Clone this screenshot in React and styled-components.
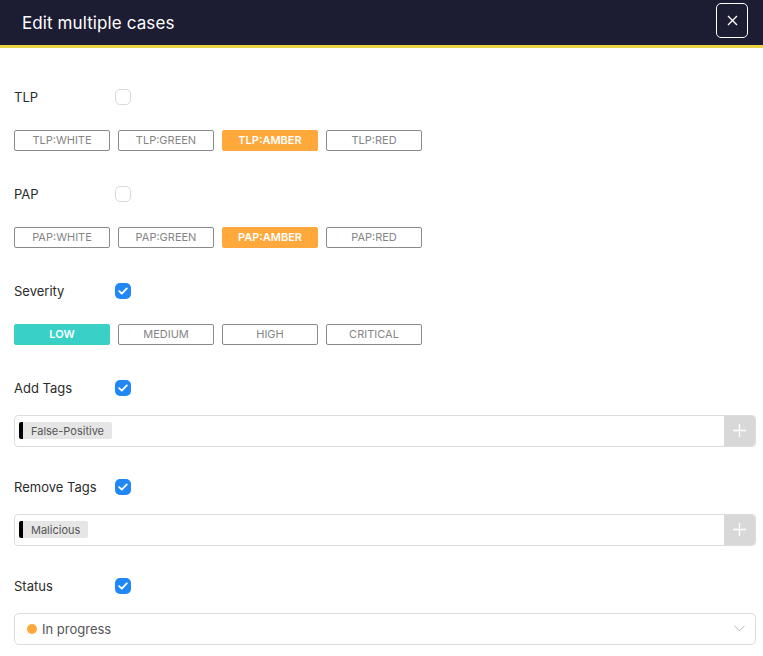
import styled, { createGlobalStyle } from 'styled-components';

const Global = createGlobalStyle`
  body {
    margin: 0;
    background: #ffffff;
    font-family: Inter, "Open Sans", sans-serif;
    color: #2b2b2b;
  }
`;

const Header = styled.div`
  height: 45px;
  background: #1c1c33;
  border-bottom: 3px solid #ead445;
  display: flex;
  align-items: center;
  justify-content: space-between;
  padding: 0 15px 0 22px;
`;

const Title = styled.h2`
  margin: 0;
  font-size: 17px;
  font-weight: 400;
  color: #ffffff;
  letter-spacing: 0.1px;
`;

const CloseButton = styled.button`
  width: 32px;
  height: 35px;
  margin-bottom: 4px;
  border: 1px solid #ffffff;
  border-radius: 5px;
  background: transparent;
  display: flex;
  align-items: center;
  justify-content: center;
  padding: 0;
`;

const Body = styled.div`
  padding: 36.5px 7px 0 14px;
`;

const Field = styled.div`
  margin-bottom: ${(p) => p.$gap}px;
`;

const LabelRow = styled.div`
  display: flex;
  align-items: center;
  height: 24px;
  margin-bottom: ${(p) => p.$gap}px;
`;

const Label = styled.span`
  width: 101px;
  font-size: 13px;
  color: #2b2b2b;
`;

const Check = styled.span`
  width: 16px;
  height: 16px;
  box-sizing: border-box;
  border-radius: 5px;
  border: ${(p) => (p.$on ? 'none' : '1px solid #d9d9d9')};
  background: ${(p) => (p.$on ? '#2186f6' : '#ffffff')};
  display: flex;
  align-items: center;
  justify-content: center;
`;

const Pills = styled.div`
  display: flex;
  gap: 8px;
`;

const Pill = styled.span`
  width: 96px;
  height: 21px;
  box-sizing: border-box;
  border-radius: 2px;
  display: flex;
  align-items: center;
  justify-content: center;
  font-size: 11px;
  font-weight: ${(p) => (p.$active ? 600 : 400)};
  color: ${(p) => (p.$active ? '#ffffff' : '#858585')};
  background: ${(p) => p.$active || '#ffffff'};
  border: 1px solid ${(p) => p.$active || '#8a8a8a'};
`;

const TagBox = styled.div`
  height: 32px;
  box-sizing: border-box;
  border: 1px solid #dcdcdc;
  border-radius: 4px;
  display: flex;
  align-items: stretch;
  overflow: hidden;
`;

const TagArea = styled.div`
  flex: 1;
  display: flex;
  align-items: center;
  padding-left: 4px;
`;

const Tag = styled.span`
  display: flex;
  align-items: center;
  height: 17px;
  background: #e6e6e6;
  border-left: 4px solid #000000;
  border-radius: 2px;
  padding: 0 8px;
  font-size: 11px;
  color: #555555;
`;

const AddButton = styled.span`
  width: 31px;
  background: #d8d8d8;
  display: flex;
  align-items: center;
  justify-content: center;
`;

const Select = styled.div`
  height: 32px;
  box-sizing: border-box;
  border: 1px solid #dcdcdc;
  border-radius: 5px;
  display: flex;
  align-items: center;
  padding: 0 10px 0 12px;
  font-size: 13px;
  color: #555555;
`;

const Dot = styled.span`
  width: 10px;
  height: 10px;
  border-radius: 50%;
  background: #ffa83c;
  margin-right: 5px;
`;

const SelectText = styled.span`
  flex: 1;
`;

const Tick = () => (
  <svg width="10" height="8" viewBox="0 0 10 8">
    <path d="M1.2 4.2 L3.8 6.6 L8.8 1.4" fill="none" stroke="#fff" strokeWidth="1.8" strokeLinecap="round" strokeLinejoin="round" />
  </svg>
);

const AMBER = '#ffa83c';
const TEAL = '#39d0c8';

const groups = [
  { label: 'TLP', on: false, items: ['TLP:WHITE', 'TLP:GREEN', 'TLP:AMBER', 'TLP:RED'], active: 2, color: AMBER },
  { label: 'PAP', on: false, items: ['PAP:WHITE', 'PAP:GREEN', 'PAP:AMBER', 'PAP:RED'], active: 2, color: AMBER },
  { label: 'Severity', on: true, items: ['LOW', 'MEDIUM', 'HIGH', 'CRITICAL'], active: 0, color: TEAL },
];

const tags = [
  { label: 'Add Tags', tag: 'False-Positive' },
  { label: 'Remove Tags', tag: 'Malicious' },
];

export default function App() {
  return (
    <>
      <Global />
      <Header>
        <Title>Edit multiple cases</Title>
        <CloseButton>
          <svg width="11" height="11" viewBox="0 0 11 11">
            <path d="M1 1 L10 10 M10 1 L1 10" stroke="#fff" strokeWidth="1.4" />
          </svg>
        </CloseButton>
      </Header>
      <Body>
        {groups.map((g) => (
          <Field key={g.label} $gap={31}>
            <LabelRow $gap={21}>
              <Label>{g.label}</Label>
              <Check $on={g.on}>{g.on && <Tick />}</Check>
            </LabelRow>
            <Pills>
              {g.items.map((it, i) => (
                <Pill key={it} $active={i === g.active ? g.color : undefined}>{it}</Pill>
              ))}
            </Pills>
          </Field>
        ))}
        {tags.map((t) => (
          <Field key={t.label} $gap={28}>
            <LabelRow $gap={15}>
              <Label>{t.label}</Label>
              <Check $on><Tick /></Check>
            </LabelRow>
            <TagBox>
              <TagArea>
                <Tag>{t.tag}</Tag>
              </TagArea>
              <AddButton>
                <svg width="13" height="13" viewBox="0 0 13 13">
                  <path d="M6.5 0 V13 M0 6.5 H13" stroke="#fff" strokeWidth="1.4" />
                </svg>
              </AddButton>
            </TagBox>
          </Field>
        ))}
        <Field $gap={0}>
          <LabelRow $gap={15}>
            <Label>Status</Label>
            <Check $on><Tick /></Check>
          </LabelRow>
          <Select>
            <Dot />
            <SelectText>In progress</SelectText>
            <svg width="11" height="7" viewBox="0 0 11 7">
              <path d="M0.5 0.8 L5.5 5.8 L10.5 0.8" fill="none" stroke="#b5b5b5" strokeWidth="1" />
            </svg>
          </Select>
        </Field>
      </Body>
    </>
  );
}
